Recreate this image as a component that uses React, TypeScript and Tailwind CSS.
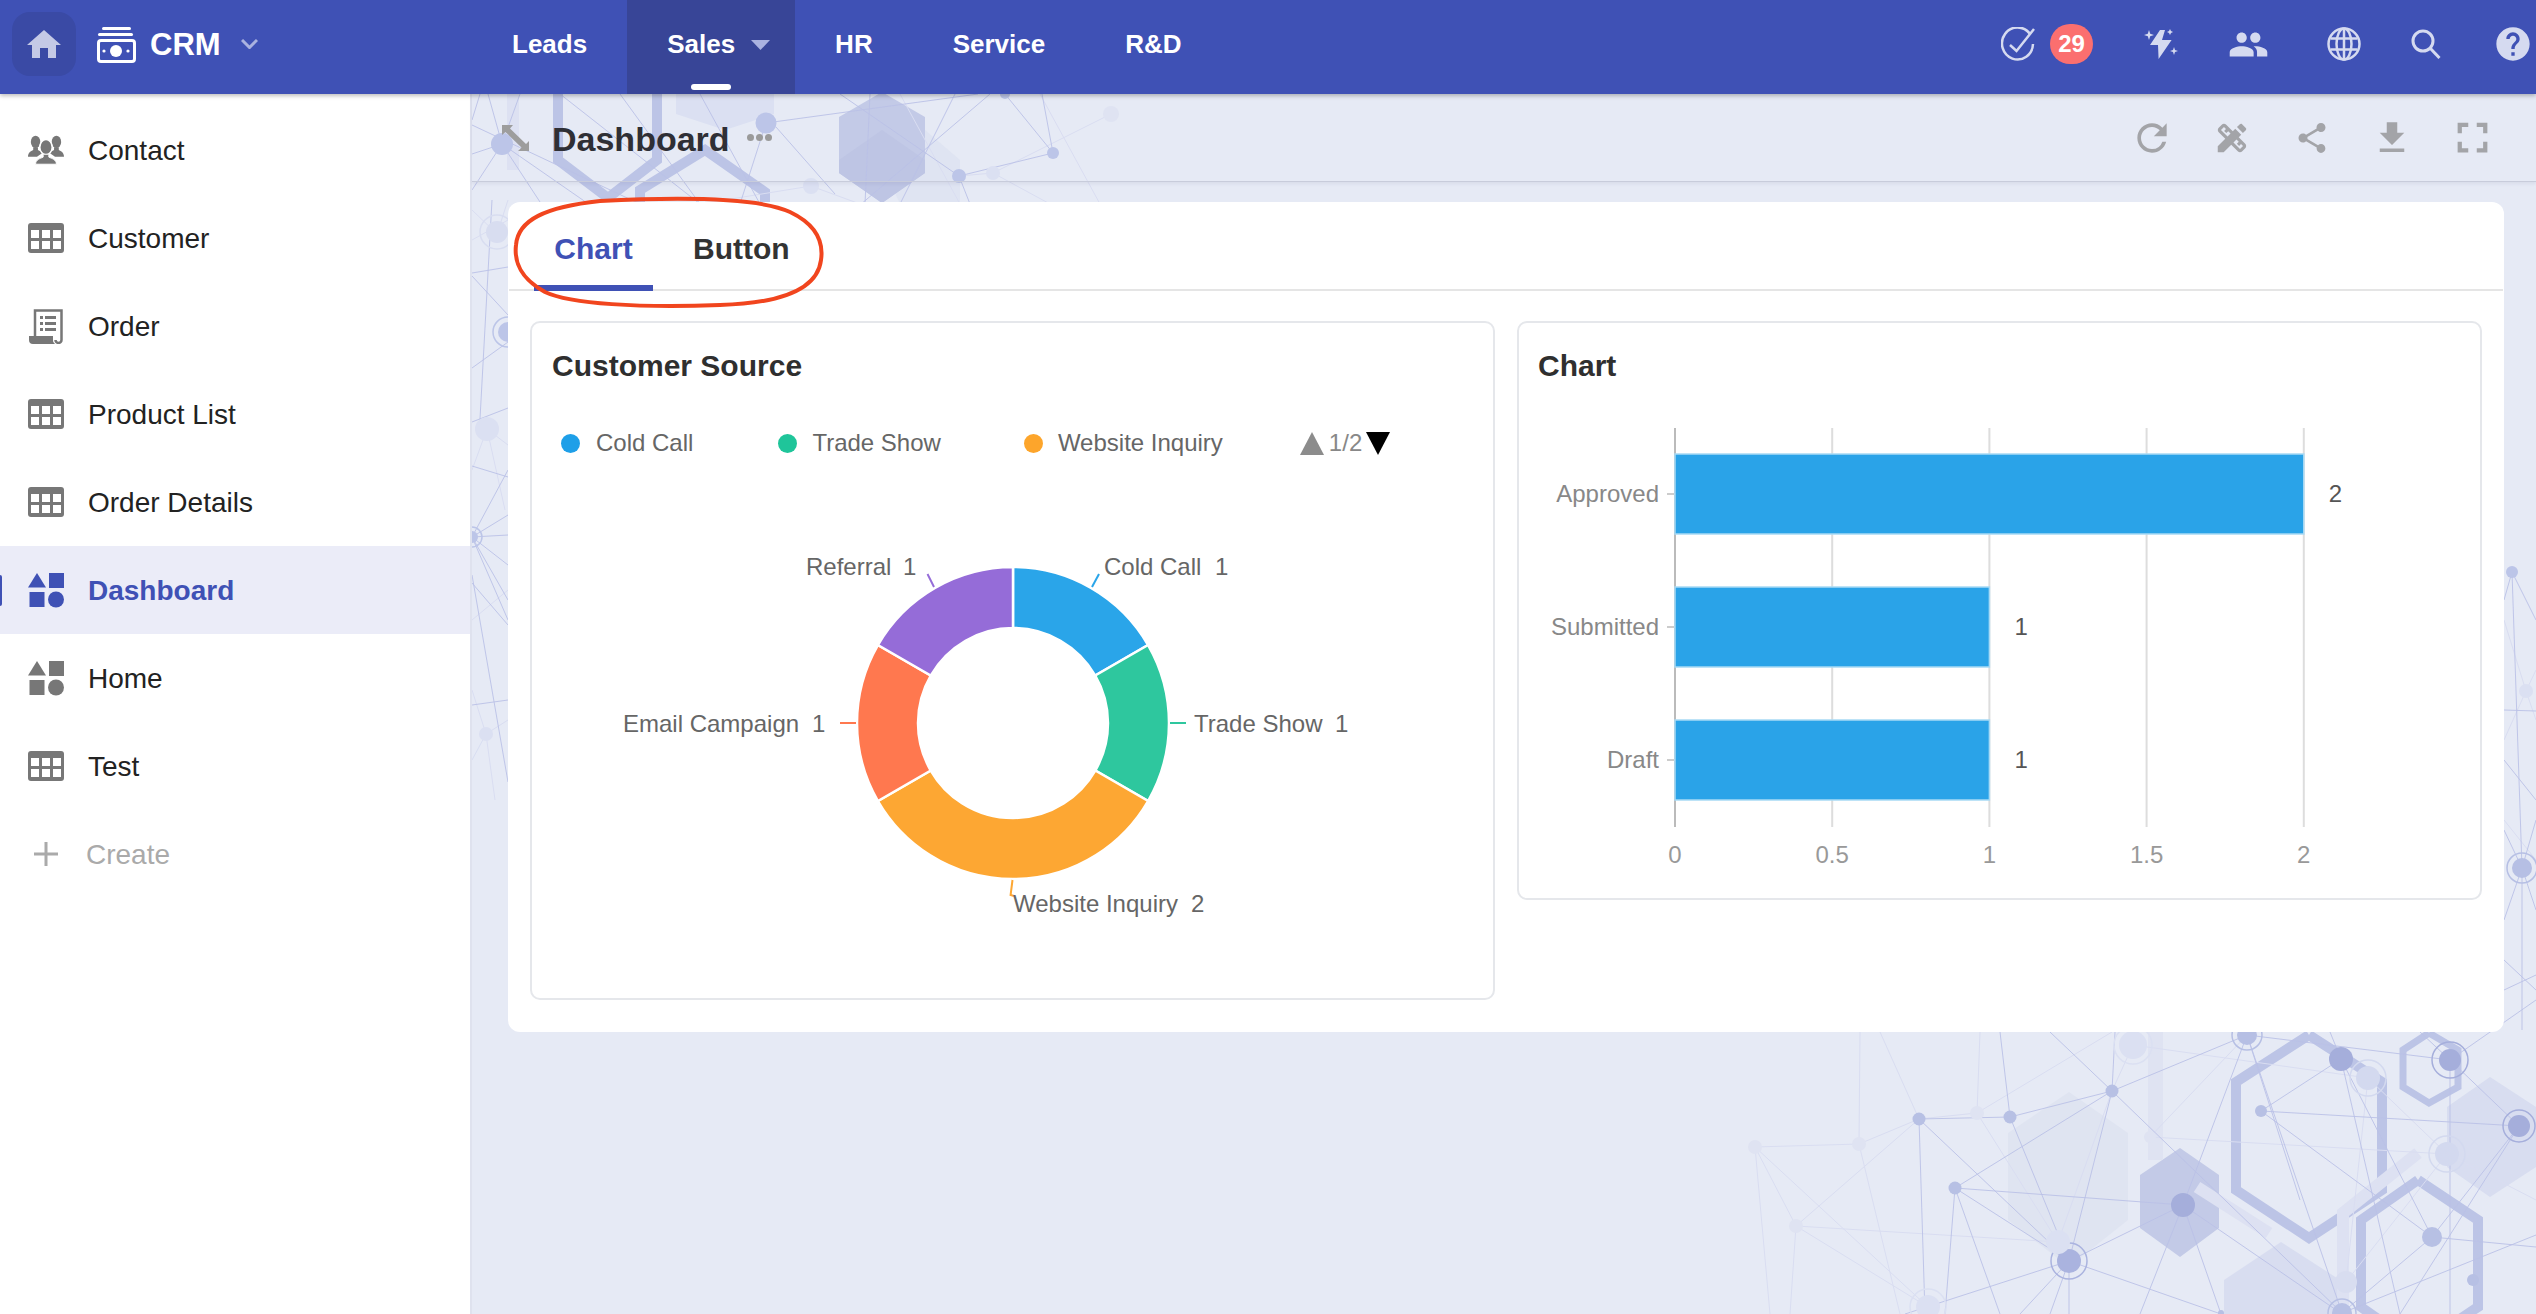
import { MdDesignServices, MdFileDownload, MdFullscreen, MdHelp, MdPeople, MdRefresh, MdShare } from "react-icons/md";

// sidebar icons
const GridIcon = () => (
  <svg width="36" height="30" viewBox="0 0 36 30" className="text-[#777]">
    <rect width="36" height="30" rx="3" fill="currentColor" />
    {[3, 14, 25].map((x) =>
      [7, 18].map((y) => <rect key={`${x}-${y}`} x={x} y={y} width="8" height="8" fill="#fff" />)
    )}
  </svg>
);

const ShapesIcon = ({ active }: { active?: boolean }) => (
  <svg width="36" height="35" viewBox="0 0 36 35" className={active ? "text-[#3f51b5]" : "text-[#777]"} fill="currentColor">
    <path d="M9 0 L18 14.5 H0 Z" />
    <rect x="21" y="0" width="15" height="15" />
    <rect x="1.5" y="19" width="15" height="15" />
    <ellipse cx="28" cy="26.5" rx="8" ry="8" />
  </svg>
);

const ContactIcon = () => (
  <svg width="38" height="30" viewBox="0 0 38 30" className="text-[#777]" fill="currentColor">
    <ellipse cx="8" cy="6.5" rx="5" ry="6.5" />
    <ellipse cx="30" cy="6.5" rx="5" ry="6.5" />
    <path d="M0 22 c0-4 3-6 5.5-7 v-3 h5 v3 c2 1 4 2 5 3 l-6 4z" />
    <path d="M38 22 c0-4-3-6-5.5-7 v-3 h-5 v3 c-2 1-4 2-5 3 l6 4z" />
    <ellipse cx="19" cy="12" rx="6.5" ry="8" stroke="#fff" strokeWidth="1.5" />
    <path d="M8 30 c0-5 5-6 8-7.5 v-3 h6 v3 c3 1.5 8 2.5 8 7.5z" stroke="#fff" strokeWidth="1" />
  </svg>
);

const OrderIcon = () => (
  <svg width="34" height="35" viewBox="0 0 34 35" className="text-[#777]">
    <path d="M6 27 V1.5 H32.5 V31 a3 3 0 0 1 -6 0" fill="none" stroke="currentColor" strokeWidth="2.5" />
    <path d="M0 27 H24 V31 a4 4 0 0 0 2 4 H4 a4 4 0 0 1 -4 -4z" fill="currentColor" />
    {[7, 13, 19].map((y) => (
      <g key={y} fill="currentColor">
        <rect x="11" y={y} width="3" height="3" />
        <rect x="16" y={y} width="11" height="3" />
      </g>
    ))}
  </svg>
);

const PlusIcon = () => (
  <svg width="36" height="24" viewBox="0 0 36 24" className="text-[#aaa]">
    <path d="M18 0 V24 M6 12 H30" stroke="currentColor" strokeWidth="3" />
  </svg>
);

const sideItems = [
  { label: "Contact", icon: <ContactIcon /> },
  { label: "Customer", icon: <GridIcon /> },
  { label: "Order", icon: <OrderIcon /> },
  { label: "Product List", icon: <GridIcon /> },
  { label: "Order Details", icon: <GridIcon /> },
  { label: "Dashboard", icon: <ShapesIcon active />, active: true },
  { label: "Home", icon: <ShapesIcon /> },
  { label: "Test", icon: <GridIcon /> },
];

// network picture behind the page, page coordinates
const solidHex = [
  { d: "925,130 960,160 960,204 900,204 880,160", fill: "#dfe4f2" },
  { d: "882,92 925,117 925,173 882,203 839,173 839,117", fill: "#c3cae7" },
  { d: "882,130 925,160 925,173 882,203 839,173 839,160", fill: "#bec5e4" },
  { d: "2180,1148 2219,1175 2219,1228 2180,1257 2140,1228 2140,1175", fill: "#c3cae7" },
  { d: "2069,1092 2128,1133 2128,1220 2069,1267 2008,1220 2008,1133", fill: "#dfe4f1" },
  { d: "2281,1242 2340,1280 2340,1314 2224,1314 2224,1280", fill: "#d8ddf0" },
  { d: "2490,1077 2536,1107 2536,1167 2490,1197 2447,1167 2447,1107", fill: "#d8ddf0" },
  { d: "676,94 774,94 774,114 725,130 676,114", fill: "#dbe0f2" },
  { d: "507,94 519,94 519,170 507,170", fill: "#dde1f2" },
  { d: "2148,980 2163,980 2163,1160 2148,1160", fill: "#dfe3f2" },
];

const outlineHex = [
  { d: "558,90 558,160 608,198 657,160 657,90", w: 10, c: "#bcc4e6" },
  { d: "640,210 640,190 705,150 765,192 765,210", w: 10, c: "#bcc4e6" },
  { d: "2309,1035 2382,1082 2382,1190 2309,1238 2236,1190 2236,1082 2309,1035", w: 10, c: "#bcc4e6" },
  { d: "2429,1033 2458,1050 2458,1087 2429,1103 2403,1087 2403,1050 2429,1033", w: 7, c: "#bcc4e6" },
  { d: "2418,1180 2478,1220 2478,1307 2418,1347 2361,1307 2361,1220 2418,1180", w: 10, c: "#bcc4e6" },
  { d: "2418,1153 2343,1213 2343,1314", w: 12, c: "#dde1f2" },
  { d: "2197,1187 2269,1233", w: 12, c: "#dde1f2" },
];

const strongLines = [
  [502, 144, 472, 154], [502, 144, 540, 202], [502, 144, 590, 205], [502, 144, 520, 94], [502, 144, 488, 94], [502, 144, 472, 190],
  [766, 123, 978, 94], [776, 127, 835, 194], [766, 123, 740, 204], [560, 94, 700, 204], [870, 94, 865, 204], [1053, 153, 959, 176],
  [1053, 153, 1005, 94], [1053, 153, 1042, 94], [959, 176, 970, 204], [860, 205, 990, 94], [840, 94, 959, 176], [472, 125, 640, 204],
  [620, 94, 700, 204], [700, 94, 760, 204], [480, 94, 472, 120], [955, 94, 900, 204],
  [472, 273, 508, 267], [492, 200, 479, 437], [472, 276, 508, 315], [472, 368, 508, 342], [472, 422, 508, 408], [472, 466, 508, 477],
  [472, 537, 508, 470], [472, 537, 508, 515], [472, 537, 508, 535], [472, 537, 508, 565], [472, 537, 508, 600], [472, 537, 508, 620],
  [472, 583, 508, 625], [472, 705, 508, 700], [472, 575, 508, 782],
  [2512, 572, 2504, 600], [2512, 572, 2536, 620], [2512, 572, 2522, 868], [2504, 710, 2536, 711], [2504, 760, 2536, 800],
  [2522, 868, 2504, 830], [2522, 868, 2536, 820], [2522, 868, 2536, 910], [2522, 868, 2504, 920], [2522, 868, 2522, 1030],
  [2504, 960, 2536, 990], [2504, 990, 2536, 975],
  [1919, 1119, 2010, 1117], [2010, 1117, 2112, 1091], [2112, 1091, 2247, 1035], [2112, 1091, 1955, 1188], [1955, 1188, 2183, 1205],
  [2183, 1205, 2069, 1261], [2069, 1261, 1955, 1188], [2069, 1261, 1919, 1119], [2069, 1261, 2112, 1091], [2069, 1261, 1905, 1314],
  [2069, 1261, 2221, 1314], [2183, 1205, 2342, 1314], [2183, 1205, 2247, 1035], [2183, 1205, 2221, 1314], [2261, 1111, 2519, 1126],
  [2261, 1111, 2341, 1059], [2261, 1111, 2432, 1237], [2247, 1035, 2450, 1060], [2450, 1060, 2519, 1126], [2432, 1237, 2536, 1247],
  [2432, 1237, 2519, 1126], [2342, 1313, 2536, 1235], [2112, 1091, 2342, 1313], [2010, 1117, 2069, 1261], [1919, 1119, 1925, 1314],
  [1955, 1188, 1945, 1314], [1955, 1188, 2000, 1314], [2341, 1059, 2432, 1237], [2341, 1059, 2400, 1314], [2247, 1035, 2342, 1313],
  [2247, 1035, 2300, 1200], [2450, 1060, 2450, 1314], [2450, 1060, 2536, 1000], [2432, 1237, 2342, 1313], [2183, 1205, 2140, 1314],
  [2069, 1261, 2050, 1314], [2069, 1261, 2069, 1314], [2069, 1261, 2020, 1314], [2112, 1091, 2115, 1032], [2010, 1117, 2000, 1032],
  [2112, 1091, 2050, 1032], [2519, 1126, 2400, 1314], [2450, 1060, 2420, 1032], [2341, 1059, 2330, 1032],
];

const lightLines = [
  [1755, 1147, 1859, 1144], [1859, 1144, 1919, 1119], [1796, 1226, 2058, 1242], [1796, 1226, 1919, 1119], [1796, 1226, 1928, 1307],
  [1755, 1147, 1796, 1226], [1755, 1147, 1928, 1307], [1859, 1144, 1900, 1314], [1755, 1147, 1770, 1314], [1796, 1226, 1790, 1314],
  [1977, 1113, 2058, 1242], [1977, 1113, 1919, 1119], [1977, 1113, 2112, 1032], [1977, 1113, 1980, 1032], [1919, 1119, 1880, 1032],
  [2150, 1137, 2447, 1154], [2150, 1137, 2247, 1035], [2133, 1045, 2368, 1078], [2368, 1078, 2447, 1154], [2447, 1154, 2536, 1200],
  [2133, 1045, 2112, 1091], [2058, 1242, 2112, 1091], [2346, 1282, 2368, 1078], [2447, 1154, 2346, 1282], [1860, 1032, 1859, 1144],
  [993, 173, 1111, 114], [993, 173, 1050, 204], [993, 173, 959, 176], [811, 186, 700, 204], [811, 186, 860, 204], [900, 94, 960, 204],
  [1040, 94, 1100, 204], [472, 240, 508, 220], [497, 234, 472, 210], [497, 234, 508, 200], [487, 429, 508, 445], [487, 429, 472, 470],
  [487, 429, 505, 510], [486, 734, 472, 760], [486, 734, 508, 720], [486, 734, 472, 690], [486, 734, 495, 800], [472, 620, 508, 590],
  [2526, 691, 2504, 620], [2526, 691, 2536, 670], [2526, 691, 2504, 740], [2526, 691, 2536, 720], [2504, 820, 2536, 860],
];

const nodes = [
  // x, y, r, fill, ring
  [502, 144, 11, "#bcc5e8", 0], [766, 123, 10.5, "#bcc5e8", 0], [1053, 153, 6, "#bcc5e8", 0], [959, 176, 7, "#bcc5e8", 0], [993, 173, 7, "#dbe0f2", 0],
  [1111, 114, 8, "#dfe3f2", 0], [811, 186, 8, "#dbe0f2", 0], [1005, 94, 5, "#bcc5e8", 0],
  [497, 232, 11, "#d8ddf0", 17], [508, 332, 10, "#bcc5e8", 15], [487, 429, 12, "#dbe0f2", 0], [472, 537, 6, "#bcc5e8", 10], [486, 734, 7, "#dbe0f2", 0],
  [2512, 572, 6, "#bcc5e8", 0], [2526, 691, 7, "#dbe0f2", 0], [2522, 868, 10, "#b6bfe4", 15],
  [1755, 1147, 7, "#dfe3f2", 0], [1859, 1144, 7, "#dfe3f2", 0], [1919, 1119, 6.5, "#b7c0e4", 0], [1977, 1113, 7, "#dfe3f2", 0], [2010, 1117, 6.5, "#b7c0e4", 0],
  [2112, 1091, 6.5, "#b7c0e4", 0], [2133, 1045, 14, "#dbe0f2", 19], [1955, 1188, 6.5, "#b7c0e4", 0], [1796, 1226, 7, "#dfe3f2", 0], [2183, 1205, 12, "#a5aedb", 0],
  [2069, 1261, 12, "#aab3df", 18], [2058, 1242, 12, "#dbe0f2", 0], [1928, 1307, 12, "#dbe0f2", 18], [2247, 1035, 10, "#b6bfe4", 15], [2341, 1059, 12, "#a5aedb", 0],
  [2450, 1060, 11, "#a5aedb", 18], [2368, 1078, 12, "#d3d9ef", 18], [2261, 1111, 6, "#b7c0e4", 0], [2519, 1126, 11, "#a5aedb", 16], [2447, 1154, 12, "#d3d9ef", 18],
  [2150, 1137, 6, "#dfe3f2", 0], [2432, 1237, 10, "#b7c0e4", 0], [2342, 1313, 10, "#b7c0e4", 14], [2221, 1313, 3, "#b7c0e4", 0], [2473, 1280, 6, "#b7c0e4", 0],
  [2346, 1282, 11, "#d8ddf0", 0],
] as [number, number, number, string, number][];

const NetworkBackground = () => (
  <svg viewBox="472 94 2064 1220" width="2064" height="1220" className="absolute inset-0">
    {solidHex.map((h) => (
      <polygon key={h.d} points={h.d} fill={h.fill} />
    ))}
    {outlineHex.map((h) => (
      <polyline key={h.d} points={h.d} fill="none" stroke={h.c} strokeWidth={h.w} />
    ))}
    {lightLines.map((l) => (
      <line key={l.join()} x1={l[0]} y1={l[1]} x2={l[2]} y2={l[3]} stroke="#d9ddf1" strokeWidth="1" />
    ))}
    {strongLines.map((l) => (
      <line key={l.join()} x1={l[0]} y1={l[1]} x2={l[2]} y2={l[3]} stroke="#bac1e6" strokeWidth="0.9" />
    ))}
    {nodes.map(([x, y, r, fill, ring]) => (
      <g key={`${x}-${y}`}>
        <circle cx={x} cy={y} r={r} fill={fill} />
        {ring > 0 && <circle cx={x} cy={y} r={ring} fill="none" stroke={fill} strokeWidth="1.5" />}
      </g>
    ))}
  </svg>
);

// donut
const cx = 1013;
const cy = 723;
const slices = [
  { from: 0, to: 60, color: "#2aa5e9" },
  { from: 60, to: 120, color: "#2ec79e" },
  { from: 120, to: 240, color: "#fda733" },
  { from: 240, to: 300, color: "#ff784f" },
  { from: 300, to: 360, color: "#956cd8" },
];

const pt = (r: number, deg: number) => {
  const a = (deg * Math.PI) / 180;
  return `${(cx + r * Math.sin(a)).toFixed(2)} ${(cy - r * Math.cos(a)).toFixed(2)}`;
};

const slicePath = (from: number, to: number) => {
  const large = to - from > 180 ? 1 : 0;
  return `M${pt(156, from)} A156 156 0 ${large} 1 ${pt(156, to)} L${pt(95, to)} A95 95 0 ${large} 0 ${pt(95, from)} Z`;
};

const pieLabels = [
  { name: "Cold Call", value: "1", x: 1104, vx: 1215, y: 566 },
  { name: "Trade Show", value: "1", x: 1194, vx: 1335, y: 723 },
  { name: "Website Inquiry", value: "2", x: 1013, vx: 1191, y: 903 },
  { name: "Email Campaign", value: "1", x: 623, vx: 812, y: 723 },
  { name: "Referral", value: "1", x: 806, vx: 903, y: 566 },
];

const DonutChart = () => (
  <svg viewBox="532 461 961 537" width="961" height="537" className="block">
    {slices.map((s) => (
      <path key={s.from} d={slicePath(s.from, s.to)} fill={s.color} stroke="#fff" strokeWidth="2.5" />
    ))}
    <path d="M1092 587 L1099 574" stroke="#2aa5e9" strokeWidth="2" fill="none" />
    <path d="M1170 723 H1186" stroke="#2ec79e" strokeWidth="2" fill="none" />
    <path d="M1012.5 880 L1010.6 895 L1014 896" stroke="#fda733" strokeWidth="2" fill="none" />
    <path d="M840 723 H856" stroke="#ff784f" strokeWidth="2" fill="none" />
    <path d="M934 587 L927.5 574" stroke="#956cd8" strokeWidth="2" fill="none" />
    {pieLabels.map((l) => (
      <g key={l.name} className="fill-[#666] text-[24px]" dominantBaseline="central">
        <text x={l.x} y={l.y}>{l.name}</text>
        <text x={l.vx} y={l.y}>{l.value}</text>
      </g>
    ))}
  </svg>
);

// bars
const barX = (v: number) => 1675 + v * 314.4;
const bars = [
  { label: "Approved", value: 2, y: 454 },
  { label: "Submitted", value: 1, y: 587 },
  { label: "Draft", value: 1, y: 720 },
];

const BarChart = () => (
  <svg viewBox="1519 384 961 514" width="961" height="514" className="block">
    {[0, 0.5, 1, 1.5, 2].map((v) => (
      <g key={v}>
        <line x1={barX(v)} y1="428" x2={barX(v)} y2="827" stroke={v === 0 ? "#bbb" : "#ddd"} strokeWidth="2" />
        <text x={barX(v)} y="854" textAnchor="middle" dominantBaseline="central" className="fill-[#999] text-[24px]">{v}</text>
      </g>
    ))}
    {bars.map((b) => (
      <g key={b.label}>
        <line x1="1667" y1={b.y + 40} x2="1675" y2={b.y + 40} stroke="#ccc" strokeWidth="2" />
        <text x="1659" y={b.y + 39} textAnchor="end" dominantBaseline="central" className="fill-[#888] text-[24px]">{b.label}</text>
        <rect x="1675" y={b.y} width={barX(b.value) - 1675} height="80" fill="#26a1e8" fillOpacity="0.98" stroke="#a8daf5" strokeWidth="1.5" />
        <text x={barX(b.value) + 25} y={b.y + 39} dominantBaseline="central" className="fill-[#555] text-[24px]">{b.value}</text>
      </g>
    ))}
  </svg>
);

const navItems = ["Leads", "Sales", "HR", "Service", "R&D"];

export default function App() {
  return (
    <div className="h-screen w-full overflow-hidden flex flex-col bg-[#e6eaf5] font-['Liberation_Sans',Arial,sans-serif]">
      {/* top bar */}
      <header className="relative z-10 h-[94px] shrink-0 flex items-center bg-[#3f51b5] shadow-[0_2px_4px_rgba(0,0,0,0.25)]">
        <div className="w-[472px] shrink-0 flex items-center pl-3 pb-[6px]">
          <div className="w-16 h-16 rounded-[18px] bg-[#3a4aa5] flex items-center justify-center">
            <svg width="34" height="28" viewBox="0 0 34 28" fill="#c4c9e6">
              <path d="M17 0 L34 15 H29 V28 H21 V18 H13 V28 H5 V15 H0 Z" />
            </svg>
          </div>
          <svg width="39" height="37" viewBox="0 0 39 37" className="ml-[21px] text-white">
            <rect x="5" y="1" width="29" height="3" rx="1.5" fill="currentColor" />
            <rect x="1" y="7" width="35" height="3" rx="1.5" fill="currentColor" />
            <rect x="1.5" y="14.5" width="36" height="21" rx="2.5" fill="none" stroke="currentColor" strokeWidth="3" />
            <circle cx="19" cy="25" r="6" fill="currentColor" />
            <circle cx="7" cy="25" r="1.6" fill="currentColor" />
            <circle cx="31" cy="25" r="1.6" fill="currentColor" />
          </svg>
          <span className="ml-[14px] text-[31px] font-bold text-white leading-none">CRM</span>
          <svg width="17" height="10" viewBox="0 0 17 10" className="ml-[20px]">
            <path d="M1 1 L8.5 8.5 L16 1" fill="none" stroke="#aab2e0" strokeWidth="3" />
          </svg>
        </div>

        <nav className="flex h-full">
          {navItems.map((item) =>
            item === "Sales" ? (
              <div key={item} className="relative h-full flex items-center pl-10 pr-[25px] pb-[5px] bg-[#384597] text-[26px] font-bold text-white">
                {item}
                <svg width="19" height="10" viewBox="0 0 19 10" className="ml-4">
                  <path d="M0 0 H19 L9.5 10 Z" fill="#aab2e0" />
                </svg>
                <span className="absolute left-[64px] bottom-[4px] w-10 h-[6px] rounded-full bg-white" />
              </div>
            ) : (
              <div key={item} className="h-full flex items-center px-10 pb-[5px] text-[26px] font-bold text-white">
                {item}
              </div>
            )
          )}
        </nav>

        <div className="ml-auto flex items-center pr-[3px] pb-[6px] text-[#d5daf0]">
          <svg width="34" height="34" viewBox="0 0 34 34" fill="none" stroke="currentColor" strokeWidth="2.5">
            <path d="M29 7 A15.5 16 0 1 0 32 17" />
            <path d="M9 18 L15.5 24 L33 2" />
          </svg>
          <span className="ml-[15px] w-[43px] h-10 rounded-full bg-[#fb6f6f] flex items-center justify-center text-[24px] font-bold text-white">29</span>
          <svg width="34" height="31" viewBox="0 0 34 31" fill="currentColor" className="ml-[51px]">
            <path d="M16 1 L6 16 H14 L14.6 30 L27.6 11 H18 L21 1 Z" />
            <path d="M5 1 L6.2 4.8 L10 6 L6.2 7.2 L5 11 L3.8 7.2 L0 6 L3.8 4.8 Z" />
            <path d="M26 0 L27 2 L29 3 L27 4 L26 6 L25 4 L23 3 L25 2 Z" />
            <path d="M30 18 L31 21 L34 22 L31 23 L30 26 L29 23 L26 22 L29 21 Z" />
          </svg>
          <MdPeople size={41} className="ml-[50px]" />
          <svg width="34" height="34" viewBox="0 0 34 34" fill="none" stroke="currentColor" strokeWidth="2.5" className="ml-[58px]">
            <circle cx="17" cy="17" r="15.5" />
            <ellipse cx="17" cy="17" rx="7.5" ry="15.5" />
            <path d="M3.5 11.5 H30.5 M3.5 22.5 H30.5 M17 1.5 V32.5" />
          </svg>
          <svg width="30" height="30" viewBox="0 0 30 30" fill="none" stroke="currentColor" strokeWidth="3" className="ml-[50px]">
            <circle cx="12" cy="12" r="10" />
            <path d="M19 19 L28.5 29" />
          </svg>
          <MdHelp size={40} className="ml-[52px]" />
        </div>
      </header>

      <div className="flex-1 flex min-h-0">
        {/* sidebar */}
        <aside className="w-[472px] shrink-0 bg-white border-r-2 border-[#dfe2ee] pt-3">
          {sideItems.map((item) => (
            <div
              key={item.label}
              className={
                item.active
                  ? "relative h-[88px] flex items-center pl-7 bg-[#ebecf8] text-[28px] font-bold text-[#3f51b5]"
                  : "h-[88px] flex items-center pl-7 text-[28px] text-[#222]"
              }
            >
              {item.active && <span className="absolute left-0 top-[29px] w-[2px] h-[31px] rounded-r bg-[#3f51b5]" />}
              <span className="w-9 flex justify-center">{item.icon}</span>
              <span className="ml-6 pt-[2px]">{item.label}</span>
            </div>
          ))}
          <div className="h-[88px] flex items-center pl-7 text-[28px] text-[#aaa]">
            <PlusIcon />
            <span className="ml-[22px] pt-[2px]">Create</span>
          </div>
        </aside>

        {/* main */}
        <main className="relative flex-1 min-w-0">
          <NetworkBackground />
          <div className="relative">
            <div className="h-[88px] flex items-center pl-[30px] pr-6 border-b border-[#c8ccdb] shadow-[0_2px_3px_rgba(60,70,120,0.08)]">
              <svg width="27" height="26" viewBox="0 0 27 26" className="text-[#9d9d9d]" fill="currentColor">
                <path d="M0 0 H11 L8 3.5 L24 19 L27 16 V26 H16 L19.5 22.5 L3.5 7 L0 10 Z" />
              </svg>
              <h1 className="ml-[23px] mt-[3px] text-[34px] font-bold leading-none text-[#2f2f35]">Dashboard</h1>
              <span className="ml-[17px] flex gap-[2px]">
                <i className="w-[7px] h-[7px] rounded-full bg-[#9a9a9a]" />
                <i className="w-[7px] h-[7px] rounded-full bg-[#9a9a9a]" />
                <i className="w-[7px] h-[7px] rounded-full bg-[#9a9a9a]" />
              </span>
              <div className="ml-auto flex items-center text-[#a3a4a8]">
                <span className="w-20 flex justify-center items-center"><MdRefresh size={44} /></span>
                <span className="w-20 flex justify-center items-center"><MdDesignServices size={38} /></span>
                <span className="w-20 flex justify-center items-center"><MdShare size={36} /></span>
                <span className="w-20 flex justify-center items-center"><MdFileDownload size={42} /></span>
                <span className="w-20 flex justify-center items-center"><MdFullscreen size={51} /></span>
              </div>
            </div>

            <div className="relative ml-9 mr-8 mt-5 rounded-xl bg-white pb-8">
              <div className="mx-[1px] h-[89px] flex pl-[25px] gap-[19px] border-b-2 border-[#e5e5e5]">
                <div className="h-[89px] px-5 w-[119px] text-center pt-[29px] border-b-[6px] border-[#3f51b5] text-[30px] leading-[36px] font-bold text-[#3f51b5]">Chart</div>
                <div className="h-[89px] px-[21px] pt-[29px] text-[30px] leading-[36px] font-bold text-[#333]">Button</div>
              </div>

              <div className="mt-[30px] flex items-start gap-[22px] px-[22px]">
                <section className="w-[965px] rounded-[10px] border-2 border-[#e5e7eb]">
                  <h2 className="pl-[20px] pt-[25px] text-[30px] leading-[36px] font-bold text-[#2f2f2f]">Customer Source</h2>
                  <div className="mt-[41px] h-9 pl-[29px] flex items-center text-[24px] text-[#666]">
                    <i className="w-[19px] h-[19px] rounded-full bg-[#1e9fe8]" />
                    <span className="ml-4">Cold Call</span>
                    <i className="ml-[85px] w-[19px] h-[19px] rounded-full bg-[#1fc59a]" />
                    <span className="ml-[15px]">Trade Show</span>
                    <i className="ml-[83px] w-[19px] h-[19px] rounded-full bg-[#fda52b]" />
                    <span className="ml-[15px]">Website Inquiry</span>
                    <svg width="24" height="23" viewBox="0 0 24 23" className="ml-[77px]"><path d="M12 0 L24 23 H0 Z" fill="#8c8c8c" /></svg>
                    <span className="ml-[5px] text-[#888]">1/2</span>
                    <svg width="24" height="23" viewBox="0 0 24 23" className="ml-[4px]"><path d="M0 0 H24 L12 23 Z" fill="#000" /></svg>
                  </div>
                  <DonutChart />
                </section>

                <section className="w-[965px] rounded-[10px] border-2 border-[#e5e7eb]">
                  <h2 className="pl-[19px] pt-[25px] text-[30px] leading-[36px] font-bold text-[#2f2f2f]">Chart</h2>
                  <BarChart />
                </section>
              </div>

              {/* hand drawn mark around the tabs */}
              <svg viewBox="509 196 330 115" width="330" height="115" className="absolute left-[1px] top-[-6px] overflow-visible">
                <path
                  d="M600 201 C680 197 760 198 790 212 C815 224 824 240 821 260 C818 285 790 303 720 305 C640 308 570 304 545 292 C520 278 514 262 516 245 C518 220 545 207 600 201 Z"
                  fill="none"
                  stroke="#f1451e"
                  strokeWidth="4"
                />
              </svg>
            </div>
          </div>
        </main>
      </div>
    </div>
  );
}
